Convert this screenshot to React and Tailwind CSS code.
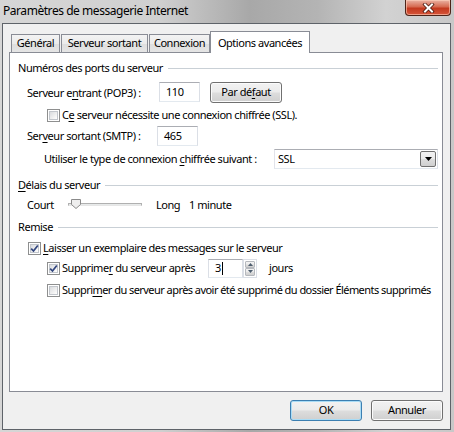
import React from 'react'

const btnBg =
  'bg-[linear-gradient(#f2f2f2_0%,#ebebeb_48%,#dddddd_52%,#cfcfcf_100%)]'

function Key({ children }) {
  return <span className="underline underline-offset-[2px] decoration-[1px]">{children}</span>
}

function Check({ checked }) {
  return (
    <span className="flex w-[13px] h-[13px] shrink-0 border border-[#8e8f8f] bg-white p-[1px]">
      <span className="relative flex flex-1 items-center justify-center border border-[#c2c6cc] bg-[linear-gradient(135deg,#d9dbde_0%,#f4f4f4_70%,#ffffff_100%)]">
        {checked && (
          <svg width="9" height="9" viewBox="0 0 9 9" className="absolute -left-px -top-px">
            <path d="M1.2 4.6 L3.5 7 L7.8 1.4" fill="none" stroke="#31457e" strokeWidth="1.7" />
          </svg>
        )}
      </span>
    </span>
  )
}

function Group({ children, className = '' }) {
  return (
    <div className={`flex h-4 items-center ${className}`}>
      <span className="whitespace-nowrap">{children}</span>
      <span className="ml-[5px] h-px flex-1 bg-[#c9d0d6]" />
    </div>
  )
}

function TextBox({ value, className = '', caret }) {
  return (
    <div
      className={`flex shrink-0 items-center border border-[#dbdfe6] border-t-[#abadb3] border-b-[#e3e9ef] bg-white pl-[6px] ${className}`}
    >
      {value}
      {caret && <span className="ml-px h-[13px] w-px bg-black" />}
    </div>
  )
}

function Button({ children, primary, className = '' }) {
  return (
    <div
      className={`flex shrink-0 items-center justify-center rounded-[3px] border ${
        primary
          ? 'border-[#3c7fb1] shadow-[inset_0_0_0_1px_#a9dcf6]'
          : 'border-[#707070] shadow-[inset_0_0_0_1px_#fbfbfb]'
      } ${btnBg} ${className}`}
    >
      {children}
    </div>
  )
}

function Tab({ label, active, className = '' }) {
  if (active) {
    return (
      <div
        className={`relative z-10 -mb-px flex h-[22px] items-start justify-center border border-b-0 border-[#898c95] bg-white pt-[3px] ${className}`}
      >
        {label}
      </div>
    )
  }
  return (
    <div
      className={`flex h-[18px] items-center justify-center border border-b-0 border-[#898c95] bg-[linear-gradient(#f3f3f3_0%,#ebebeb_50%,#dedede_51%,#e5e5e5_100%)] ${className}`}
    >
      {label}
    </div>
  )
}

export default function App() {
  return (
    <div className="flex h-[432px] w-[454px] flex-col whitespace-nowrap bg-[linear-gradient(90deg,#d6d6d6_0%,#d0d0d0_35%,#a8a8a8_55%,#b4b4b4_70%,#d2d2d2_85%,#c8c8c8_100%)] pb-[2px] pl-[2px] pr-[3px] font-['Noto_Sans',sans-serif] text-[11px] tracking-[-0.45px] text-black">
      {/* title bar */}
      <div className="flex h-[23px] items-start justify-between">
        <span className="mt-[2px] pl-[1px] text-[12px] tracking-[-0.45px]">Paramètres de messagerie Internet</span>
        <div className="flex h-[16px] w-[46px] items-center justify-center rounded-b-[4px] border border-t-0 border-[#4d2419] bg-[linear-gradient(#eab3a4_0%,#d66a51_45%,#c3391f_55%,#d6553a_100%)] shadow-[inset_0_0_0_1px_rgba(255,210,190,0.6)]">
          <svg width="13" height="10" viewBox="0 0 13 10">
            <path d="M3 1.5 L10 8.5 M10 1.5 L3 8.5" stroke="#4a1a10" strokeWidth="3.6" strokeLinecap="square" />
            <path d="M3 1.5 L10 8.5 M10 1.5 L3 8.5" stroke="#ffffff" strokeWidth="2" strokeLinecap="square" />
          </svg>
        </div>
      </div>

      {/* client area */}
      <div className="flex flex-1 flex-col border border-[#5e6369] bg-[#f0f0f0]">
        {/* tabs */}
        <div className="ml-[8px] mt-[7px] flex items-end">
          <Tab label="Général" className="w-[49px]" />
          <Tab label="Serveur sortant" className="ml-[1px] w-[87px]" />
          <Tab label="Connexion" className="ml-[1px] w-[61px]" />
          <Tab label="Options avancées" active className="w-[100px]" />
        </div>

        {/* panel */}
        <div className="ml-[6px] mr-[7px] h-[340px] border border-[#898c95] bg-white pl-[8px] pr-[4px] pt-[7px]">
          <Group>Numéros des ports du serveur</Group>

          <div className="ml-[9px] mt-[6px] flex h-[21px] items-start">
            <span className="mt-[3px] w-[132px] shrink-0">
              Serveur e<Key>n</Key>trant (POP3) :
            </span>
            <TextBox value="110" className="h-[20px] w-[41px]" />
            <Button className="ml-[10px] h-[21px] w-[72px]">
              Par dé<Key>f</Key>aut
            </Button>
          </div>

          <div className="ml-[29px] mt-[4px] flex h-4 items-center">
            <Check />
            <span className="ml-[2px]">
              C<Key>e</Key> serveur nécessite une connexion chiffrée (SSL).
            </span>
          </div>

          <div className="ml-[9px] mt-[3px] flex h-[20px] items-center">
            <span className="w-[130px] shrink-0">
              Ser<Key>v</Key>eur sortant (SMTP) :
            </span>
            <TextBox value="465" className="h-[20px] w-[41px]" />
          </div>

          <div className="ml-[26px] mt-[3px] flex h-[20px] items-center">
            <span className="w-[230px] shrink-0">
              Utiliser le type de connexion <Key>c</Key>hiffrée suivant :
            </span>
            <div className="flex h-[20px] w-[164px] shrink-0 items-center justify-between border border-[#abadb3] border-b-[#e3e9ef] border-l-[#e2e3ea] border-r-[#dbdfe6] bg-white pl-[3px] pr-[1px]">
              <span>SSL</span>
              <div className={`flex h-[16px] w-[16px] items-center justify-center rounded-[2px] border border-[#707070] ${btnBg}`}>
                <svg width="7" height="4" viewBox="0 0 7 4">
                  <path d="M0 0 H7 L3.5 4 Z" fill="#000" />
                </svg>
              </div>
            </div>
          </div>

          <Group className="mt-[8px]">
            <Key>D</Key>élais du serveur
          </Group>

          <div className="ml-[9px] mt-[4px] flex h-4 items-center">
            <span className="w-[41px] shrink-0">Court</span>
            <div className="relative h-[16px] w-[74px] shrink-0">
              <div className="absolute left-0 right-0 top-[6px] h-[3px] border border-[#b0b0b0] border-b-[#e6e6e6] bg-[#e7eaea]" />
              <svg width="11" height="11" viewBox="0 0 11 11" className="absolute left-[3px] top-[2px]">
                <path d="M0.5 0.5 H9.5 V5.5 L5 9.5 L0.5 5.5 Z" fill="#efefef" stroke="#8a8a8a" />
              </svg>
            </div>
            <span className="ml-[14px] w-[33px] shrink-0">Long</span>
            <span>1 minute</span>
          </div>

          <Group className="mt-[6px]">Remise</Group>

          <div className="ml-[10px] mt-[5px] flex h-4 items-center">
            <Check checked />
            <span className="ml-[2px]">
              <Key>L</Key>aisser un exemplaire des messages sur le serveur
            </span>
          </div>

          <div className="ml-[29px] mt-[2px] flex h-[20px] items-center">
            <div className="flex w-[161px] shrink-0 items-center">
              <Check checked />
              <span className="ml-[2px]">
                Supprime<Key>r</Key> du serveur après
              </span>
            </div>
            <TextBox value="3" caret className="h-[19px] w-[35px]" />
            <div className="flex h-[19px] w-[14px] shrink-0 flex-col border border-[#dbdfe6] bg-white p-px">
              <div className={`flex flex-1 items-center justify-center rounded-[1px] border border-[#b5b8bd] ${btnBg}`}>
                <svg width="5" height="3" viewBox="0 0 5 3">
                  <path d="M0 3 H5 L2.5 0 Z" fill="#4d5d6e" />
                </svg>
              </div>
              <div className={`flex flex-1 items-center justify-center rounded-[1px] border border-[#b5b8bd] ${btnBg}`}>
                <svg width="5" height="3" viewBox="0 0 5 3">
                  <path d="M0 0 H5 L2.5 3 Z" fill="#4d5d6e" />
                </svg>
              </div>
            </div>
            <span className="ml-[12px]">jours</span>
          </div>

          <div className="ml-[29px] mt-[4px] flex h-4 items-center">
            <Check />
            <span className="ml-[2px] tracking-[-0.55px]">
              Suppri<Key>m</Key>er du serveur après avoir été supprimé du dossier Éléments supprimés
            </span>
          </div>
        </div>

        {/* footer */}
        <div className="mr-[7px] mt-[8px] flex justify-end gap-[9px]">
          <Button primary className="h-[21px] w-[72px] bg-[linear-gradient(#eaf6fd_0%,#d9f0fc_48%,#bee6fd_52%,#a7d9f5_100%)]">OK</Button>
          <Button className="h-[21px] w-[72px]">Annuler</Button>
        </div>
      </div>
    </div>
  )
}
